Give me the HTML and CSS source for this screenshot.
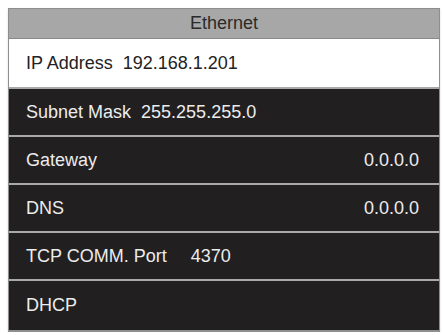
FILE: index.html
```html
<!DOCTYPE html>
<html>
<head>
<meta charset="utf-8">
<link rel="stylesheet" href="styles.css">
</head>
<body>
<div class="frame">
  <div class="header">Ethernet</div>
  <div class="row row-selected"><span class="label">IP Address</span><span class="value inline">192.168.1.201</span></div>
  <div class="row"><span class="label">Subnet Mask</span><span class="value inline">255.255.255.0</span></div>
  <div class="row spread"><span class="label">Gateway</span><span class="value">0.0.0.0</span></div>
  <div class="row spread"><span class="label">DNS</span><span class="value">0.0.0.0</span></div>
  <div class="row"><span class="label">TCP COMM. Port</span><span class="value inline wide">4370</span></div>
  <div class="row last"><span class="label">DHCP</span></div>
</div>
</body>
</html>
```
FILE: styles.css
```css
html, body {
  margin: 0;
  padding: 0;
  background: #ffffff;
}
body {
  padding: 8px 2px 0 8px;
  font-family: "Liberation Sans", Arial, sans-serif;
}
.frame {
  width: 430px;
  border: 1px solid #8e8e8e;
  border-bottom: 2px solid #8e8e8e;
  background: #221f20;
  box-shadow: 0 1px 2px rgba(0,0,0,0.15);
}
.header {
  height: 29px;
  line-height: 29px;
  text-align: center;
  background: #a7a7a7;
  color: #2a2a2a;
  font-size: 18px;
  border-bottom: 1px solid #8a8a8a;
}
.row {
  display: flex;
  align-items: center;
  height: 46px;
  padding: 0 20px 0 17px;
  border-top: 2px solid #a9a9a9;
  color: #ececec;
  font-size: 18px;
  background: #221f20;
}
.row-selected {
  height: 48px;
  border-top: none;
  background: #ffffff;
  color: #222222;
}
.row.last {
  height: 49px;
}
.spread {
  justify-content: space-between;
}
.value.inline {
  margin-left: 10px;
}
.value.wide {
  margin-left: 24px;
}
```
